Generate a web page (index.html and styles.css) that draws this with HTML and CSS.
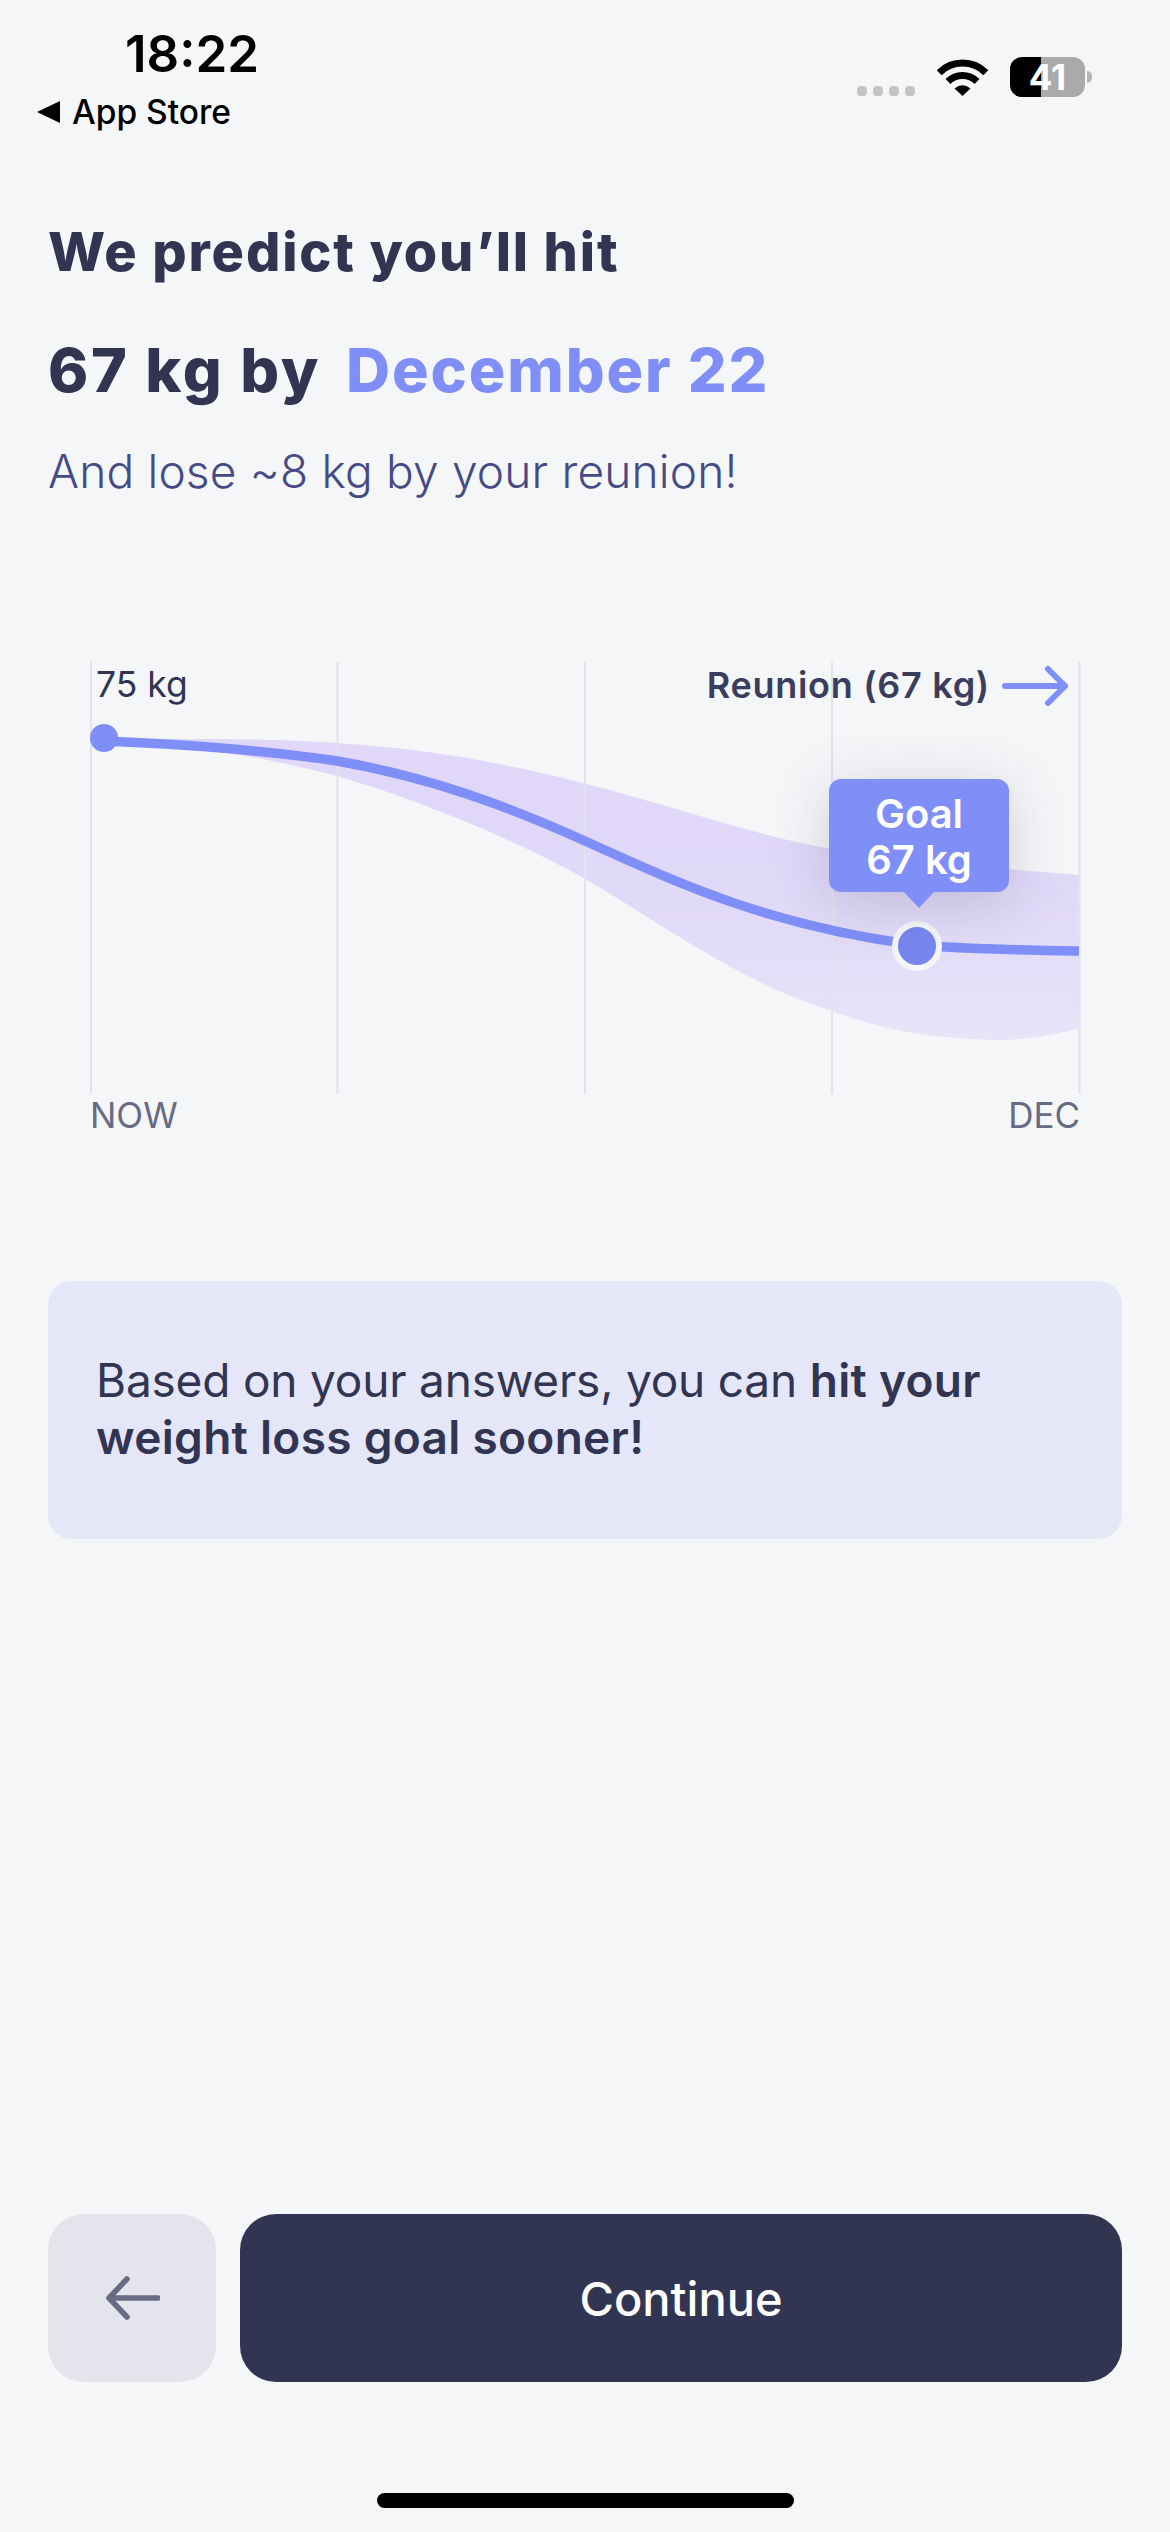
FILE: index.html
```html
<!DOCTYPE html>
<html lang="en">
<head>
<meta charset="utf-8">
<title>Prediction</title>
<link rel="stylesheet" href="styles.css">
</head>
<body>
<main class="page">
  <header class="status">
    <div class="status-left">
      <div class="time">18:22</div>
      <div class="back-app"><span class="tri"></span><span>App Store</span></div>
    </div>
    <div class="status-right">
      <div class="signal"><i></i><i></i><i></i><i></i></div>
      <svg class="wifi" viewBox="0 0 51 37" width="51" height="37">
        <path d="M2.2 13.7A33 33 0 0 1 48.8 13.7M11 22.5A20.5 20.5 0 0 1 40 22.5" fill="none" stroke="#000" stroke-width="7"/>
        <path d="M25.5 37L17.5 29.5Q25.5 23 33.5 29.5Z" fill="#000"/>
      </svg>
      <div class="battery">41</div>
      <div class="nub"></div>
    </div>
  </header>

  <section class="intro">
    <h1 class="title">We predict you’ll hit</h1>
    <h2 class="headline">67 kg by <span class="accent">December 22</span></h2>
    <p class="sub">And lose ~8 kg by your reunion!</p>
  </section>

  <section class="chart">
    <div class="plot">
      <svg class="graph" viewBox="90 663 990 432" width="990" height="432">
        <defs>
          <linearGradient id="bandFade" x1="0" y1="0" x2="0" y2="1">
            <stop offset="0" stop-color="#e0d7f9"/>
            <stop offset="0.55" stop-color="#e1d9f8"/>
            <stop offset="1" stop-color="#e7e4f8"/>
          </linearGradient>
        </defs>
        <path class="band" fill="url(#bandFade)" d="M104 740C200 740 270 739 337 744C430 750 510 764 620 794C700 816 770 840 832 850C900 860 1000 870 1079 876L1079 1030C1040 1038 1020 1041 1000 1041C930 1040 880 1030 832 1012C760 990 690 945 620 901C560 862 450 810 337 777C260 757 200 748 104 742Z"/>
        <g class="grid">
          <path d="M91 663V1095"/><path d="M337.5 663V1095"/><path d="M585 663V1095"/><path d="M832 663V1095"/><path d="M1079.5 663V1095"/>
        </g>
        <path class="curve" d="M104 742C200 746 270 752 337 762C430 778 510 808 585 842C680 885 770 927 917 946C960 950 1020 951 1079 952"/>
        <circle class="start" cx="104" cy="739" r="14"/>
        <path class="arrow" d="M1005 687H1065M1048 670L1065 687L1048 704"/>
      </svg>
      <span class="label-start">75 kg</span>
      <span class="label-end">Reunion (67 kg)</span>
      <div class="goal-dot"></div>
      <div class="tooltip">Goal<br>67 kg</div>
    </div>
    <div class="axis"><span>NOW</span><span>DEC</span></div>
  </section>

  <section class="note">
    <p>Based on your answers, you can <strong>hit your</strong></p>
    <p><strong>weight loss goal sooner!</strong></p>
  </section>

  <footer class="actions">
    <button class="btn-back" aria-label="Back">
      <svg viewBox="0 0 56 44" width="56" height="44"><path d="M54 22H5M23 3L5 22L23 41" fill="none" stroke="#686b84" stroke-width="5.5" stroke-linecap="round" stroke-linejoin="round"/></svg>
    </button>
    <button class="btn-next">Continue</button>
  </footer>
  <div class="home"></div>
</main>
</body>
</html>
```
FILE: styles.css
```css
* { box-sizing: border-box; }
html, body { margin: 0; padding: 0; background: #f5f6f8; }
body { font-family: Inter, "Liberation Sans", sans-serif; color: #323552; }
.page { width: 1170px; height: 2532px; display: flex; flex-direction: column; overflow: hidden; }

.status { display: flex; justify-content: space-between; height: 132px; padding: 27px 78px 0 37px; }
.status-left { display: flex; flex-direction: column; }
.time { font-size: 51px; line-height: 54px; font-weight: 600; color: #000; margin-left: 88px; }
.back-app { display: flex; align-items: center; gap: 12px; font-size: 33.5px; line-height: 40px; font-weight: 500; color: #000; margin-top: 11px; }
.tri { width: 0; height: 0; border-style: solid; border-width: 11px 23px 11px 0; border-color: transparent #000 transparent transparent; }
.status-right { display: flex; align-items: flex-end; height: 70px; }
.signal { display: flex; gap: 6px; margin: 0 22px 1px 0; }
.signal i { display: block; width: 10px; height: 10px; border-radius: 4px; background: #c4c4c6; }
.wifi { margin: 0 22px 1px 0; display: block; }
.battery { width: 75px; height: 40px; border-radius: 12px; background: linear-gradient(90deg, #000 31px, #aaaaaa 31px); color: #fff; font-size: 35px; line-height: 40px; font-weight: 700; text-align: center; }
.nub { width: 5px; height: 12px; margin: 0 0 14px 2px; border-radius: 0 6px 6px 0; background: #b5b5b7; }

.intro { padding: 0 48px; }
.title { margin: 85px 0 0; font-size: 54px; line-height: 70px; font-weight: 800; letter-spacing: 1.85px; }
.headline { margin: 48px 0 0; font-size: 61px; line-height: 70px; font-weight: 800; letter-spacing: 2.6px; }
.accent { color: #7f8ff7; margin-left: 9px; letter-spacing: 1.9px; }
.sub { margin: 38px 0 0; font-size: 46px; line-height: 56px; font-weight: 300; letter-spacing: 0.2px; color: #454a85; }

.chart { margin: 163px 0 0 90px; width: 990px; }
.plot { position: relative; height: 432px; }
.graph { display: block; overflow: visible; }
.grid path { stroke: #e2e2ee; stroke-width: 2; fill: none; }
.curve { fill: none; stroke: #7f8ff7; stroke-width: 9.5; }
.start { fill: #7f8ff7; }
.arrow { fill: none; stroke: #7f8ff7; stroke-width: 6; stroke-linecap: round; stroke-linejoin: round; }
.label-start, .label-end { position: absolute; top: 2px; font-size: 35.5px; line-height: 42px; }
.label-start { left: 6px; font-weight: 400; }
.label-end { right: 90px; font-size: 36px; font-weight: 600; letter-spacing: 0.7px; color: #3a3d5c; }
.goal-dot { position: absolute; left: 802px; top: 259px; width: 50px; height: 50px; border-radius: 50%; background: #7886ef; border: 6px solid #f5f6f8; }
.tooltip { position: absolute; left: 739px; top: 117px; width: 180px; height: 113px; border-radius: 12px; background: #7f8ff7; color: #fff; font-size: 40px; line-height: 46px; font-weight: 600; text-align: center; padding-top: 12px; box-shadow: 0 10px 60px rgba(50, 53, 82, 0.2); }
.tooltip::after { content: ""; position: absolute; left: 75px; top: 113px; border-style: solid; border-width: 16px 15px 0; border-color: #7f8ff7 transparent transparent; }
.axis { display: flex; justify-content: space-between; font-size: 35px; line-height: 40px; color: #666a85; margin-top: 1px; }

.note { margin: 146px 48px 0; height: 258px; border-radius: 24px; background: #e5e6f8; padding: 71px 48px 0; }
.note p { margin: 0; font-size: 46px; line-height: 57px; font-weight: 400; letter-spacing: -0.2px; color: #323552; white-space: nowrap; }
.note strong { font-weight: 600; letter-spacing: 0.3px; }

.actions { margin-top: auto; padding: 0 48px; display: flex; gap: 24px; height: 168px; }
.btn-back, .btn-next { border: 0; border-radius: 36px; font-family: inherit; padding: 0; display: flex; align-items: center; justify-content: center; }
.btn-back { width: 168px; background: #e3e4ec; }
.btn-next { flex: 1; background: #323552; color: #fff; font-size: 47px; font-weight: 500; }
.home { width: 417px; height: 15px; border-radius: 8px; background: #000; margin: 111px auto 24px; }
```
